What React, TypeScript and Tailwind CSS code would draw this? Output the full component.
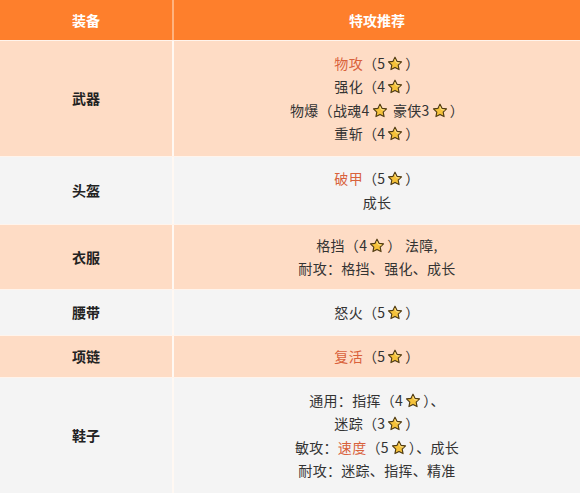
import React from 'react';

type Part = string | { hi: string } | { star: true };

const Star = () => (
    <svg viewBox="0 0 24 24" className="inline-block w-[16px] h-[16px] mx-[2px] align-[-3px]">
        <path
            d="M12 1.8l3 6.2 6.8.9-5 4.7 1.3 6.8L12 17.1l-6.1 3.3 1.3-6.8-5-4.7 6.8-.9z"
            fill="#f5c23a"
            stroke="#4e3a12"
            strokeWidth="1.7"
            strokeLinejoin="round"
        />
        <path d="M12 5.6l2 4.3 4.4.6" fill="none" stroke="#fde697" strokeWidth="1.3" strokeLinecap="round" />
    </svg>
);

interface Row {
    name: string;
    lines: Part[][];
    peach: boolean;
    h: string;
}

const S = { star: true } as const;

const rows: Row[] = [
    {
        name: '武器',
        peach: true,
        h: 'h-[116px]',
        lines: [
            [{ hi: '物攻' }, '（5', S, '）'],
            ['强化（4', S, '）'],
            ['物爆（战魂4', S, ' 豪侠3', S, '）'],
            ['重斩（4', S, '）'],
        ],
    },
    {
        name: '头盔',
        peach: false,
        h: 'h-[68px]',
        lines: [[{ hi: '破甲' }, '（5', S, '）'], ['成长']],
    },
    {
        name: '衣服',
        peach: true,
        h: 'h-[65px]',
        lines: [['格挡（4', S, '） 法障,'], ['耐攻：格挡、强化、成长']],
    },
    {
        name: '腰带',
        peach: false,
        h: 'h-[46px]',
        lines: [['怒火（5', S, '）']],
    },
    {
        name: '项链',
        peach: true,
        h: 'h-[42px]',
        lines: [[{ hi: '复活' }, '（5', S, '）']],
    },
    {
        name: '鞋子',
        peach: false,
        h: 'h-[116px]',
        lines: [
            ['通用：指挥（4', S, '）、'],
            ['迷踪（3', S, '）'],
            ['敏攻：', { hi: '速度' }, '（5', S, '）、成长'],
            ['耐攻：迷踪、指挥、精准'],
        ],
    },
];

function renderPart(p: Part, i: number) {
    if (typeof p === 'string') return <span key={i}>{p}</span>;
    if ('hi' in p) return <span key={i} className="text-[#d9623c]">{p.hi}</span>;
    return <Star key={i} />;
}

export default function App() {
    return (
        <div className="w-[580px] h-[493px] overflow-hidden bg-white font-['Microsoft_YaHei','Noto_Sans_CJK_SC',sans-serif]">
            <div className="grid grid-cols-[174px_1fr] h-[40px] bg-[#fe7f2c] text-white font-bold text-[14px]">
                <div className="flex items-center justify-center border-r-2 border-[#ffb27e]">装备</div>
                <div className="flex items-center justify-center">特攻推荐</div>
            </div>
            {rows.map(row => (
                <div
                    key={row.name}
                    className={`grid grid-cols-[174px_1fr] border-t border-[#fff4ec] ${row.h} ${row.peach ? 'bg-[#fedcc5]' : 'bg-[#f4f4f4]'}`}
                >
                    <div className="flex items-center justify-center border-r-2 border-[#fff8f2] font-bold text-[14px] text-[#222]">
                        {row.name}
                    </div>
                    <div className="flex flex-col items-center justify-center text-[14px] leading-[23.5px] text-[#333] tracking-[0.3px]">
                        {row.lines.map((line, li) => (
                            <div key={li} className="whitespace-pre">
                                {line.map(renderPart)}
                            </div>
                        ))}
                    </div>
                </div>
            ))}
        </div>
    );
}
